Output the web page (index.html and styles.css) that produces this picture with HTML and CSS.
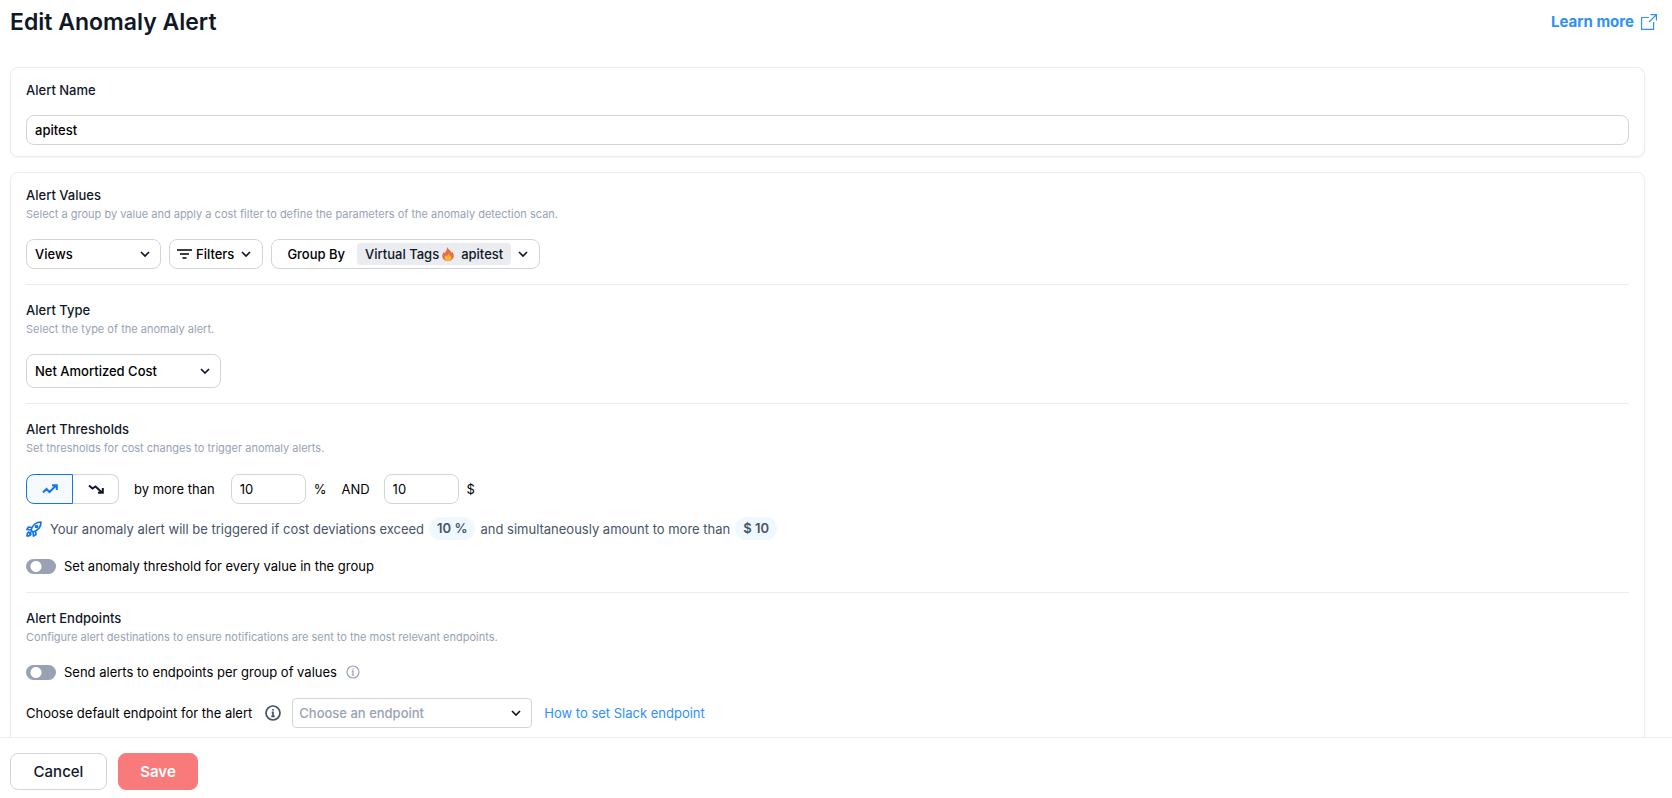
FILE: index.html
```html
<!DOCTYPE html>
<html lang="en">
<head>
    <meta charset="UTF-8">
    <meta name="viewport" content="width=device-width, initial-scale=1.0">
    <title>Edit Anomaly Alert</title>
    <link rel="stylesheet" href="styles.css">
</head>
<body>
    <header class="page-header">
        <h1>Edit Anomaly Alert</h1>
        <a class="learn-more" href="#">
            Learn more
            <svg width="16" height="16" viewBox="0 0 16 16" fill="none" stroke="currentColor" stroke-width="1.2">
                <path d="M8 3.500H.6v11.900h12V8M9.500.6h5.900v6M15.400.6L8 8"/>
            </svg>
        </a>
    </header>

    <form class="content" id="alertForm">
        <section class="card name-card">
            <label class="title" for="alertName">Alert Name</label>
            <input class="field" type="text" id="alertName" value="apitest">
        </section>

        <section class="card">
            <div class="section values-section">
                <h2 class="title">Alert Values</h2>
                <p class="hint">Select a group by value and apply a cost filter to define the parameters of the anomaly detection scan.</p>
                <div class="row filter-row">
                    <div class="select views-select">
                        <select class="field" aria-label="Views">
                            <option>Views</option>
                        </select>
                        <svg class="chevron" width="10" height="6" viewBox="0 0 10 6"><path d="M1 1l4 4 4-4"/></svg>
                    </div>
                    <button class="field filters-button" type="button">
                        <svg width="15" height="10" viewBox="0 0 15 10" fill="none" stroke="#000" stroke-width="1.6">
                            <path d="M0 1h15M3 5h9M5.500 9h4"/>
                        </svg>
                        Filters
                        <svg class="chevron" width="10" height="6" viewBox="0 0 10 6"><path d="M1 1l4 4 4-4"/></svg>
                    </button>
                    <button class="field group-button" type="button">
                        Group By
                        <span class="group-value">
                            Virtual Tags
                            <svg width="12" height="14" viewBox="0 0 12 14">
                                <path fill="#ec6a45" d="M5.200 0C6.400 2.600 8.600 3.200 9.600 6c.3-.5.300-.9.200-1.500C11.300 6 12 8 11.700 9.800 11.300 12.300 9 14 6 14S.6 12.300.3 9.800C.1 7.500 1 6.300 1.900 5c.3.500.5.900.5 1.400C3.800 4.500 5.300 2.700 5.200 0z"/>
                                <path fill="#fdb93a" d="M6.500 6c.2 1.800 2.700 2.800 2.900 4.800.1 1.800-1.400 2.900-3.400 2.900s-3.500-1.200-3.400-3c.1-1.100.6-1.700 1-2.500.5.300.7.700.9 1.200C5.500 8.600 6.500 7.500 6.500 6z"/>
                            </svg>
                            apitest
                        </span>
                        <svg class="chevron" width="10" height="6" viewBox="0 0 10 6"><path d="M1 1l4 4 4-4"/></svg>
                    </button>
                </div>
            </div>

            <div class="section type-section">
                <h2 class="title">Alert Type</h2>
                <p class="hint">Select the type of the anomaly alert.</p>
                <div class="select type-select">
                    <select class="field" aria-label="Alert Type">
                        <option>Net Amortized Cost</option>
                    </select>
                    <svg class="chevron" width="10" height="6" viewBox="0 0 10 6"><path d="M1 1l4 4 4-4"/></svg>
                </div>
            </div>

            <div class="section">
                <h2 class="title">Alert Thresholds</h2>
                <p class="hint">Set thresholds for cost changes to trigger anomaly alerts.</p>
                <div class="row threshold-row">
                    <div class="trend">
                        <button class="trend-up" type="button" aria-label="Increase">
                            <svg width="16" height="10" viewBox="0 0 16 10"><path d="M1 8.500l3.500-3.500 3 3L14 1.500M10 1.200h4.800V6"/></svg>
                        </button>
                        <button class="trend-down" type="button" aria-label="Decrease">
                            <svg width="16" height="10" viewBox="0 0 16 10"><path d="M1 1.500l3.500 3 3-2L14 8.500M10 8.800h4.800V4"/></svg>
                        </button>
                    </div>
                    <label class="more-than" for="percent">by more than</label>
                    <input class="field number" type="text" id="percent" value="10">
                    <span class="unit">%</span>
                    <label class="and" for="amount">AND</label>
                    <input class="field number" type="text" id="amount" value="10">
                    <span class="unit">$</span>
                </div>
                <p class="summary">
                    <svg width="16" height="16" viewBox="0 0 16 16" fill="none" stroke="#1573ed" stroke-width="1.7" stroke-linecap="round" stroke-linejoin="round">
                        <path d="M5 9C6.500 4.500 9.500 1 15 1c0 5-3.500 8.500-8 10zM5.500 6.500L2.500 6 .9 8.500 5 9M9.500 10.500l.5 3-2.500 1.600L7 11M1 15c0-2 .5-3.500 2-4M1 15c2 0 3.500-.5 4-2M3.500 12.500L5 11"/>
                        <circle cx="10.500" cy="5.500" r="1"/>
                    </svg>
                    <span>Your anomaly alert will be triggered if cost deviations exceed</span>
                    <strong>10 %</strong>
                    <span>and simultaneously amount to more than</span>
                    <strong>$ 10</strong>
                </p>
                <label class="toggle">
                    <input type="checkbox" role="switch">
                    Set anomaly threshold for every value in the group
                </label>
            </div>

            <div class="section">
                <h2 class="title">Alert Endpoints</h2>
                <p class="hint">Configure alert destinations to ensure notifications are sent to the most relevant endpoints.</p>
                <div class="row">
                    <label class="toggle">
                        <input type="checkbox" role="switch">
                        Send alerts to endpoints per group of values
                    </label>
                    <svg class="info" width="14" height="14" viewBox="0 0 14 14">
                        <circle cx="7" cy="7" r="6"/>
                        <path d="M7 3.500v1.200M6 6.200h1V10M6 10h2"/>
                    </svg>
                </div>
                <div class="row endpoint-row">
                    <label for="endpoint">Choose default endpoint for the alert</label>
                    <svg class="info dark" width="16" height="16" viewBox="0 0 16 16">
                        <circle cx="8" cy="8" r="7"/>
                        <path d="M8 4v1.500M6.700 7.300H8v4M6.300 11.300h3.400"/>
                    </svg>
                    <div class="select endpoint-select">
                        <select class="field" id="endpoint">
                            <option>Choose an endpoint</option>
                        </select>
                        <svg class="chevron" width="10" height="6" viewBox="0 0 10 6"><path d="M1 1l4 4 4-4"/></svg>
                    </div>
                    <a href="#">How to set Slack endpoint</a>
                </div>
            </div>
        </section>
    </form>

    <footer class="actions">
        <button class="cancel" type="button">Cancel</button>
        <button class="save" type="submit" form="alertForm">Save</button>
    </footer>
</body>
</html>
```

FILE: styles.css
```css
* {
    box-sizing: border-box;
}

body {
    display: flex;
    flex-direction: column;
    height: 100vh;
    margin: 0;
    overflow: hidden;
    font-family: Inter, "Liberation Sans", sans-serif;
    font-size: 13px;
    line-height: 20px;
    color: #000;
    background-color: #fff;
}

button,
input,
select {
    margin: 0;
    font: inherit;
    color: inherit;
}

button {
    cursor: pointer;
}

a {
    color: #2e90fa;
    text-decoration: none;
}

svg {
    flex-shrink: 0;
}

.page-header {
    display: flex;
    justify-content: space-between;
    align-items: center;
    flex-shrink: 0;
    height: 44px;
    padding: 0 15px 0 10px;
}

.page-header h1 {
    margin: 0;
    font-size: 23px;
    font-weight: 600;
    line-height: 32px;
    color: #101828;
}

.learn-more {
    display: flex;
    align-items: center;
    gap: 7px;
    font-size: 15px;
    font-weight: 700;
}

.content {
    flex: 1;
    min-height: 0;
    padding: 23px 27px 0 10px;
    overflow: hidden;
}

.card {
    padding: 0 15px;
    border: 1px solid #eaecf0;
    border-radius: 8px;
    box-shadow: 0 1px 2px rgba(16, 24, 40, 0.06);
}

.name-card {
    margin-bottom: 15px;
    padding-top: 12px;
    padding-bottom: 11px;
}

.title {
    display: block;
    margin: 0;
    font-size: 13px;
    font-weight: 500;
    line-height: 20px;
    color: #101828;
}

.hint {
    margin: 0 0 16px;
    font-size: 11px;
    line-height: 18px;
    color: #98a2b3;
}

.field {
    height: 30px;
    padding: 0 8px;
    border: 1px solid #d0d5dd;
    border-radius: 8px;
    font-weight: 500;
    background-color: #fff;
}

.name-card .field {
    width: 100%;
    margin-top: 15px;
}

.section {
    padding: 15px 0 16px;
    border-bottom: 1px solid #eaecf0;
}

.values-section {
    padding-top: 12px;
    padding-bottom: 15px;
}

.type-section {
    padding-bottom: 15px;
}

.row {
    display: flex;
    align-items: center;
}

.filter-row {
    gap: 8px;
}

.select {
    position: relative;
}

.select select {
    width: 100%;
    appearance: none;
}

.select .chevron {
    position: absolute;
    top: calc(50% - 3px);
    right: 11px;
    pointer-events: none;
}

.chevron {
    fill: none;
    stroke: #101828;
    stroke-width: 1.7;
}

.views-select {
    width: 135px;
}

.filters-button {
    display: flex;
    align-items: center;
    gap: 4px;
    padding: 0 7px;
}

.filters-button .chevron {
    margin: 0 4px 0 3px;
}

.group-button {
    display: flex;
    align-items: center;
    padding: 0 11px 0 15px;
}

.group-value {
    display: flex;
    align-items: center;
    gap: 6px;
    height: 22px;
    margin: 0 7px 0 12px;
    padding: 0 8px;
    border-radius: 4px;
    color: #101828;
    background-color: #eaecf0;
}

.group-value svg {
    margin-left: -3px;
    margin-right: 1px;
}

.type-select {
    width: 195px;
}

.type-select .field {
    height: 34px;
}

.threshold-row {
    margin-top: 17px;
}

.trend {
    display: flex;
}

.trend button {
    display: flex;
    align-items: center;
    justify-content: center;
    height: 30px;
    padding: 0;
    border: 1px solid #d0d5dd;
    background-color: #fff;
}

.trend svg {
    fill: none;
    stroke: #101828;
    stroke-width: 2;
}

.trend .trend-up {
    width: 47px;
    border-color: #1573ed;
    border-radius: 8px 0 0 8px;
    background-color: #f5faff;
}

.trend .trend-up svg {
    stroke: #1573ed;
}

.trend .trend-down {
    width: 46px;
    border-left: none;
    border-radius: 0 8px 8px 0;
}

.more-than {
    margin: 0 16px 0 15px;
}

.number {
    width: 75px;
    font-weight: 400;
}

.unit {
    margin-left: 8px;
}

.and {
    margin: 0 14px 0 15px;
}

.summary {
    display: flex;
    align-items: center;
    gap: 5px;
    margin: 13px 0 16px;
    color: #475467;
}

.summary svg {
    margin-right: 3px;
}

.summary strong {
    padding: 0 8px;
    border-radius: 12px;
    font-weight: 600;
    line-height: 23px;
    background-color: #eff8ff;
}

.toggle {
    display: flex;
    align-items: center;
    gap: 8px;
}

.toggle input {
    width: 30px;
    height: 15px;
    border-radius: 8px;
    appearance: none;
    background: radial-gradient(circle at 10px 50%, #fff 5px, #98a2b3 6px);
    cursor: pointer;
}

.toggle input:checked {
    background: radial-gradient(circle at 20px 50%, #fff 5px, #1573ed 6px);
}

.info {
    margin-left: 9px;
    fill: none;
    stroke: #98a2b3;
    stroke-width: 1.2;
}

.info.dark {
    margin: 0 11px 0 13px;
    stroke: #475467;
    stroke-width: 1.7;
}

.endpoint-row {
    margin-top: 16px;
}

.endpoint-select {
    width: 240px;
    margin-right: 12px;
}

.endpoint-select .field {
    padding: 0 6px;
    border-radius: 4px;
    color: #98a2b3;
}

.actions {
    display: flex;
    flex-shrink: 0;
    gap: 11px;
    padding: 15px 10px 8px;
    border-top: 1px solid #eaecf0;
    background-color: #fff;
}

.actions button {
    width: 97px;
    height: 37px;
    padding: 0;
    border: 1px solid #d0d5dd;
    border-radius: 8px;
    font-size: 15px;
    font-weight: 500;
    color: #101828;
    background-color: #fff;
}

.actions .save {
    width: 80px;
    border-color: #f97a7a;
    font-weight: 600;
    color: #fff;
    background-color: #f97a7a;
}
```
